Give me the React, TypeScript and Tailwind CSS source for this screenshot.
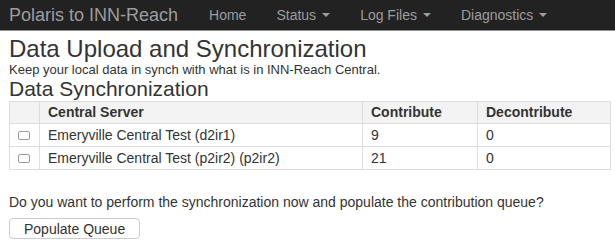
import React from 'react';

interface ServerRow {
  id: string;
  name: string;
  contribute: number;
  decontribute: number;
}

const rows: ServerRow[] = [
  { id: 'd2ir1', name: 'Emeryville Central Test (d2ir1)', contribute: 9, decontribute: 0 },
  { id: 'p2ir2', name: 'Emeryville Central Test (p2ir2) (p2ir2)', contribute: 21, decontribute: 0 },
];

const Caret = () => (
  <span className="ml-[6px] inline-block h-0 w-0 border-x-[4px] border-t-[4px] border-x-transparent border-t-[#9d9d9d] align-middle" />
);

const Navbar = () => (
  <nav className="flex h-[31px] items-center border-b border-[#8a8a8a] bg-[#222] pl-[9px] text-[#9d9d9d]">
    <span className="text-[18px] leading-none">Polaris to INN-Reach</span>
    <ul className="ml-[31px] flex items-center gap-[30px] text-[14px] leading-none">
      <li>Home</li>
      <li className="flex items-center">Status<Caret /></li>
      <li className="flex items-center">Log Files<Caret /></li>
      <li className="flex items-center">Diagnostics<Caret /></li>
    </ul>
  </nav>
);

const Checkbox = () => (
  <div className="h-[9px] w-[12px] rounded-[2px] border border-[#999] bg-white" />
);

export default function App() {
  return (
    <div className="h-[246px] w-[615px] overflow-hidden bg-white font-['Liberation_Sans',Arial,sans-serif] text-[#333]">
      <Navbar />
      <main className="px-[9px]">
        <h1 className="mt-[5px] text-[24px] leading-[26px]">Data Upload and Synchronization</h1>
        <p className="text-[13px] leading-[16px]">Keep your local data in synch with what is in INN-Reach Central.</p>
        <h3 className="text-[21px] leading-[22px]">Data Synchronization</h3>

        <table className="mt-[1px] w-[601px] table-fixed border-collapse border border-[#ddd] text-[14px]">
          <colgroup>
            <col className="w-[30px]" />
            <col className="w-[323px]" />
            <col className="w-[115px]" />
            <col className="w-[133px]" />
          </colgroup>
          <thead className="bg-[#f3f3f3]">
            <tr className="h-[22px]">
              <th className="border border-[#ddd]" />
              <th className="border border-[#ddd] pl-[8px] text-left font-bold">Central Server</th>
              <th className="border border-[#ddd] pl-[8px] text-left font-bold">Contribute</th>
              <th className="border border-[#ddd] pl-[8px] text-left font-bold">Decontribute</th>
            </tr>
          </thead>
          <tbody>
            {rows.map((row) => (
              <tr key={row.id} className="h-[23px]">
                <td className="border border-[#ddd] pl-[8px]">
                  <Checkbox />
                </td>
                <td className="border border-[#ddd] pl-[8px]">{row.name}</td>
                <td className="border border-[#ddd] pl-[8px]">{row.contribute}</td>
                <td className="border border-[#ddd] pl-[8px]">{row.decontribute}</td>
              </tr>
            ))}
          </tbody>
        </table>

        <p className="mt-[22px] text-[14px] leading-[20px]">
          Do you want to perform the synchronization now and populate the contribution queue?
        </p>
        <button className="mt-[6px] h-[21px] rounded-[4px] border border-[#ccc] bg-white px-[14px] text-[14px] leading-none text-[#333]">
          Populate Queue
        </button>
      </main>
    </div>
  );
}
